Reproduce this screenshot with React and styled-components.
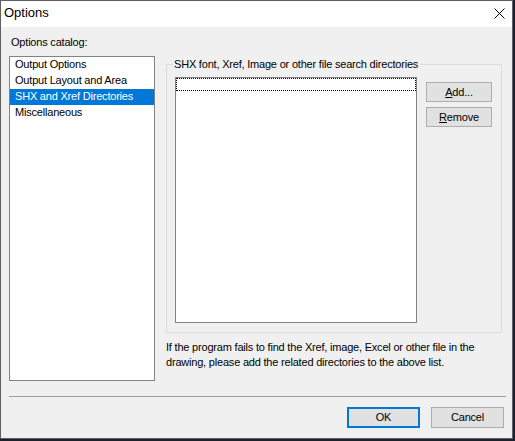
import React from 'react';
import styled, { createGlobalStyle } from 'styled-components';

const GlobalStyle = createGlobalStyle`
  html, body {
    margin: 0;
    padding: 0;
    background: #1c2030;
  }
  body {
    font-family: 'Liberation Sans', Arial, sans-serif;
    font-size: 11px;
    color: #000;
  }
`;

const Window = styled.div`
  width: 513px;
  height: 439px;
  box-sizing: border-box;
  border: 1px solid #5f5f5f;
  background: #f0f0f0;
  display: flex;
  flex-direction: column;
`;

const TitleBar = styled.div`
  height: 26px;
  flex: none;
  background: #fff;
  display: flex;
  align-items: flex-start;
  justify-content: space-between;
`;

const Title = styled.span`
  font-size: 13px;
  line-height: 15px;
  padding: 4px 0 0 3px;
`;

const CloseButton = styled.div`
  width: 26px;
  height: 26px;
  display: flex;
  align-items: center;
  justify-content: center;
  padding-bottom: 1px;
  box-sizing: border-box;
`;

const Body = styled.div`
  flex: 1;
  display: flex;
  flex-direction: column;
  padding: 9px 8px 0 8px;
  letter-spacing: -0.2px;
`;

const MainRow = styled.div`
  display: flex;
  height: 345px;
`;

const LeftColumn = styled.div`
  width: 146px;
  display: flex;
  flex-direction: column;
`;

const Label = styled.div`
  line-height: 13px;
  height: 13px;
  margin-bottom: 7px;
  padding-left: 2px;
  white-space: nowrap;
`;

const CatalogList = styled.ul`
  flex: 1;
  margin: 0;
  padding: 0;
  list-style: none;
  background: #fff;
  border: 1px solid #828282;
`;

const CatalogItem = styled.li`
  height: 16px;
  box-sizing: border-box;
  line-height: 14px;
  padding: 0 0 2px 5px;
  white-space: nowrap;
  background: ${props => (props.selected ? '#0078d7' : 'transparent')};
  color: ${props => (props.selected ? '#fff' : '#000')};
`;

const RightColumn = styled.div`
  margin-left: 11px;
  width: 336px;
  display: flex;
  flex-direction: column;
`;

const GroupBox = styled.fieldset`
  margin: 22px 0 0 0;
  padding: 6px 9px 9px 8px;
  border: 1px solid #dcdcdc;
  min-width: 0;
  box-sizing: border-box;
  width: 336px;
`;

const GroupLegend = styled.legend`
  margin-left: -2px;
  padding: 0 2px 0 1px;
  line-height: 13px;
  white-space: nowrap;
`;

const GroupRow = styled.div`
  display: flex;
  gap: 9px;
`;

const DirList = styled.div`
  width: 242px;
  height: 246px;
  box-sizing: border-box;
  background: #fff;
  border: 1px solid #828282;
`;

const FocusRow = styled.div`
  height: 13px;
  box-sizing: border-box;
  border: 1px dotted #000;
`;

const ButtonColumn = styled.div`
  display: flex;
  flex-direction: column;
  gap: 5px;
  margin-top: 5px;
`;

const Button = styled.button`
  width: ${props => props.width || 66}px;
  height: ${props => props.height || 20}px;
  padding: 0;
  margin: 0;
  box-sizing: border-box;
  background: #e1e1e1;
  border: ${props => (props.primary ? '2px solid #0078d7' : '1px solid #adadad')};
  font-family: 'Liberation Sans', Arial, sans-serif;
  font-size: 11px;
  letter-spacing: -0.2px;
  color: #000;
  line-height: 13px;

  u {
    text-decoration: underline;
    text-underline-offset: 1px;
  }
`;

const HelpText = styled.p`
  margin: 7px 0 0 0;
  line-height: 15px;
  white-space: nowrap;
`;

const Separator = styled.hr`
  margin: 15px 0 0 0;
  border: none;
  height: 1px;
  background: #a0a0a0;
  width: 497px;
`;

const Footer = styled.div`
  display: flex;
  justify-content: flex-end;
  gap: 11px;
  margin-top: 10px;
`;

const catalog = [
  'Output Options',
  'Output Layout and Area',
  'SHX and Xref Directories',
  'Miscellaneous',
];

export default function App() {
  return (
    <>
      <GlobalStyle />
      <Window>
        <TitleBar>
          <Title>Options</Title>
          <CloseButton>
            <svg width="11" height="11" viewBox="0 0 11 11">
              <path d="M0.5 0.5 L10.5 10.5 M10.5 0.5 L0.5 10.5" stroke="#000" strokeWidth="1" fill="none" />
            </svg>
          </CloseButton>
        </TitleBar>
        <Body>
          <MainRow>
            <LeftColumn>
              <Label>Options catalog:</Label>
              <CatalogList>
                {catalog.map((item, index) => (
                  <CatalogItem key={item} selected={index === 2}>{item}</CatalogItem>
                ))}
              </CatalogList>
            </LeftColumn>
            <RightColumn>
              <GroupBox>
                <GroupLegend>SHX font, Xref, Image or other file search directories</GroupLegend>
                <GroupRow>
                  <DirList>
                    <FocusRow />
                  </DirList>
                  <ButtonColumn>
                    <Button><u>A</u>dd...</Button>
                    <Button><u>R</u>emove</Button>
                  </ButtonColumn>
                </GroupRow>
              </GroupBox>
              <HelpText>
                If the program fails to find the Xref, image, Excel or other file in the
                <br />
                drawing, please add the related directories to the above list.
              </HelpText>
            </RightColumn>
          </MainRow>
          <Separator />
          <Footer>
            <Button primary width={73} height={21}>OK</Button>
            <Button width={73} height={21}>Cancel</Button>
          </Footer>
        </Body>
      </Window>
    </>
  );
}
